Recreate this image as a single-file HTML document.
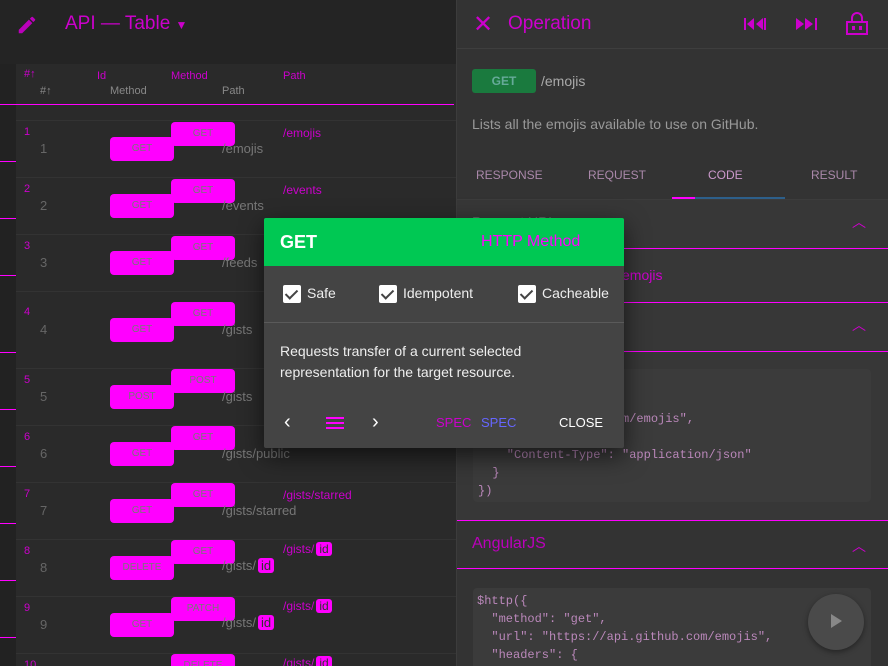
<!DOCTYPE html>
<html style="overflow:hidden;width:888px;height:666px"><head><meta charset="utf-8"><style>
*{box-sizing:border-box;margin:0;padding:0}
body{width:888px;height:666px;overflow:hidden;background:#222;font-family:"Liberation Sans",sans-serif;position:relative;color:#999}
.a{position:absolute}
.mg{background:#f0f}
.bd{position:absolute;width:64px;height:24px;border-radius:4px;background:#f0f;color:#777;font-size:10px;text-align:center;line-height:24px}
.num{position:absolute;left:40px;font-size:13px;color:#666}
.pth{position:absolute;left:222px;font-size:13px;color:#777}
.pm{position:absolute;left:283px;font-size:12px;color:#c0c}
.nm{position:absolute;left:24px;font-size:11px;color:#c0c}
.sep{position:absolute;left:16px;width:440px;height:1px;background:#333}
.ml{position:absolute;left:0;width:16px;height:1px;background:#f0f}
.id{display:inline-block;background:#f0f;color:#333;border-radius:3px;padding:0 3px;margin-left:2px}
.code{font-family:"Liberation Mono",monospace;font-size:12px;color:#b8b;white-space:pre;line-height:18px}
.cb{position:absolute;width:18px;height:18px;background:#fff;border-radius:2px}
.cb:after{content:"";position:absolute;left:5px;top:2px;width:5px;height:10px;border:solid #444;border-width:0 2px 2px 0;transform:rotate(45deg)}
</style></head><body>
<div class="a" style="left:0;top:0;width:456px;height:64px;background:#242424"></div>
<svg class="a" style="left:16px;top:14px" width="22" height="22" viewBox="0 0 24 24"><path d="M3 17.25V21h3.75L17.8 9.94l-3.75-3.75L3 17.25zM20.7 7.04a1 1 0 000-1.41l-2.34-2.34a1 1 0 00-1.41 0l-1.83 1.83 3.75 3.75 1.83-1.83z" fill="#b0b"/></svg>
<div class="a" style="left:65px;top:13px;font-size:19px;color:#c0c">API — Table <span style="font-size:12px">▼</span></div>
<div class="a" style="left:16px;top:64px;width:440px;height:602px;background:#2a2a2a"></div>
<div class="a" style="left:24px;top:68px;font-size:11px;color:#c0c">#↑</div>
<div class="a" style="left:97px;top:70px;font-size:11px;color:#c0c">Id</div>
<div class="a" style="left:171px;top:70px;font-size:11px;color:#c0c">Method</div>
<div class="a" style="left:283px;top:70px;font-size:11px;color:#c0c">Path</div>
<div class="a" style="left:40px;top:85px;font-size:11px;color:#888">#↑</div>
<div class="a" style="left:110px;top:85px;font-size:11px;color:#888">Method</div>
<div class="a" style="left:222px;top:85px;font-size:11px;color:#888">Path</div>
<div class="a mg" style="left:0;top:104px;width:454px;height:1px"></div>

<div class="sep" style="top:120px"></div><div class="sep" style="top:177px"></div><div class="sep" style="top:234px"></div><div class="sep" style="top:291px"></div><div class="sep" style="top:368px"></div><div class="sep" style="top:425px"></div><div class="sep" style="top:482px"></div><div class="sep" style="top:539px"></div><div class="sep" style="top:596px"></div><div class="sep" style="top:653px"></div>
<div class="ml" style="top:161px"></div><div class="ml" style="top:218px"></div><div class="ml" style="top:275px"></div><div class="ml" style="top:352px"></div><div class="ml" style="top:409px"></div><div class="ml" style="top:466px"></div><div class="ml" style="top:523px"></div><div class="ml" style="top:580px"></div><div class="ml" style="top:637px"></div>

<div class="nm" style="top:126px">1</div><div class="num" style="top:141px">1</div><div class="bd" style="left:171px;top:122px">GET</div><div class="bd" style="left:110px;top:137px">GET</div><div class="pm" style="top:126px">/emojis</div><div class="pth" style="top:141px">/emojis</div>
<div class="nm" style="top:183px">2</div><div class="num" style="top:198px">2</div><div class="bd" style="left:171px;top:179px">GET</div><div class="bd" style="left:110px;top:194px">GET</div><div class="pm" style="top:183px">/events</div><div class="pth" style="top:198px">/events</div>
<div class="nm" style="top:240px">3</div><div class="num" style="top:255px">3</div><div class="bd" style="left:171px;top:236px">GET</div><div class="bd" style="left:110px;top:251px">GET</div><div class="pth" style="top:255px">/feeds</div>
<div class="nm" style="top:306px">4</div><div class="num" style="top:322px">4</div><div class="bd" style="left:171px;top:302px">GET</div><div class="bd" style="left:110px;top:318px">GET</div><div class="pth" style="top:322px">/gists</div>
<div class="nm" style="top:374px">5</div><div class="num" style="top:389px">5</div><div class="bd" style="left:171px;top:369px">POST</div><div class="bd" style="left:110px;top:385px">POST</div><div class="pth" style="top:389px">/gists</div>
<div class="nm" style="top:431px">6</div><div class="num" style="top:446px">6</div><div class="bd" style="left:171px;top:426px">GET</div><div class="bd" style="left:110px;top:442px">GET</div><div class="pth" style="top:446px">/gists/public</div>
<div class="nm" style="top:488px">7</div><div class="num" style="top:503px">7</div><div class="bd" style="left:171px;top:483px">GET</div><div class="bd" style="left:110px;top:499px">GET</div><div class="pm" style="top:488px">/gists/starred</div><div class="pth" style="top:503px">/gists/starred</div>
<div class="nm" style="top:545px">8</div><div class="num" style="top:560px">8</div><div class="bd" style="left:171px;top:540px">GET</div><div class="bd" style="left:110px;top:556px">DELETE</div><div class="pm" style="top:542px">/gists/<span class="id">id</span></div><div class="pth" style="top:558px">/gists/<span class="id">id</span></div>
<div class="nm" style="top:602px">9</div><div class="num" style="top:617px">9</div><div class="bd" style="left:171px;top:597px">PATCH</div><div class="bd" style="left:110px;top:613px">GET</div><div class="pm" style="top:599px">/gists/<span class="id">id</span></div><div class="pth" style="top:615px">/gists/<span class="id">id</span></div>
<div class="nm" style="top:659px">10</div><div class="bd" style="left:171px;top:654px">DELETE</div><div class="pm" style="top:656px">/gists/<span class="id">id</span></div>

<div class="a" style="left:456px;top:0;width:432px;height:666px;background:#333;border-left:1px solid #3c3c3c"></div>
<div class="a" style="left:457px;top:48px;width:431px;height:1px;background:#3e3e3e"></div>
<div class="a" style="left:473px;top:10px;font-size:24px;color:#c0c">✕</div>
<div class="a" style="left:508px;top:13px;font-size:19px;color:#c0c">Operation</div>
<svg class="a" style="left:743px;top:16px" width="28" height="16" viewBox="0 0 28 16"><rect x="1" y="2" width="2" height="12" fill="#c0c"/><path d="M4 8l7-6v12zM13 8l7-6v12z" fill="#c0c"/><rect x="21" y="2" width="2" height="12" fill="#c0c"/></svg>
<svg class="a" style="left:794px;top:16px" width="28" height="16" viewBox="0 0 28 16"><path d="M2 2l8 6-8 6zM11 2l8 6-8 6z" fill="#c0c"/><rect x="21" y="2" width="2" height="12" fill="#c0c"/></svg>
<svg class="a" style="left:845px;top:12px" width="24" height="24" viewBox="0 0 24 24"><rect x="2" y="10" width="20" height="12" fill="none" stroke="#c0c" stroke-width="2"/><path d="M7 10V6a5 5 0 0110 0v4" fill="none" stroke="#c0c" stroke-width="2"/><rect x="7" y="14" width="3" height="4" fill="#c0c"/><rect x="14" y="14" width="3" height="4" fill="#c0c"/></svg>
<div class="a" style="left:472px;top:69px;width:64px;height:24px;background:#1a7a3e;border-radius:3px;color:#6a9;font-size:12px;text-align:center;line-height:24px;font-weight:bold">GET</div>
<div class="a" style="left:541px;top:73px;font-size:14px;color:#aaa">/emojis</div>
<div class="a" style="left:472px;top:116px;font-size:14px;color:#999">Lists all the emojis available to use on GitHub.</div>
<div class="a" style="left:476px;top:168px;font-size:12px;color:#a8a">RESPONSE</div>
<div class="a" style="left:588px;top:168px;font-size:12px;color:#a8a">REQUEST</div>
<div class="a" style="left:708px;top:168px;font-size:12px;color:#c9c">CODE</div>
<div class="a" style="left:811px;top:168px;font-size:12px;color:#a8a">RESULT</div>
<div class="a" style="left:672px;top:197px;width:113px;height:2px;background:#2d5f8a"></div>
<div class="a mg" style="left:672px;top:197px;width:23px;height:2px"></div>
<div class="a" style="left:457px;top:199px;width:431px;height:1px;background:#3c3c3c"></div>
<div class="a" style="left:457px;top:200px;width:431px;height:320px;background:#373737"></div>
<div class="a" style="left:472px;top:214px;font-size:14px;color:#888">Request URL</div>
<div class="a" style="left:852px;top:212px;font-size:14px;color:#c0c">︿</div>
<div class="a mg" style="left:620px;top:248px;width:268px;height:1px"></div>
<div class="a" style="left:622px;top:267px;font-size:14px;color:#c0c">emojis</div>
<div class="a mg" style="left:620px;top:302px;width:268px;height:1px"></div>
<div class="a" style="left:852px;top:315px;font-size:14px;color:#c0c">︿</div>
<div class="a mg" style="left:620px;top:351px;width:268px;height:1px"></div>
<div class="a" style="left:473px;top:369px;width:398px;height:133px;background:#3b3b3b;border-radius:4px"></div>
<div class="a code" style="left:478px;top:410px">         i.github.com/emojis",

    "Content-Type": "application/json"
  }
})</div>
<div class="a mg" style="left:457px;top:520px;width:431px;height:1px"></div>
<div class="a" style="left:472px;top:535px;font-size:16px;color:#b0b">AngularJS</div>
<div class="a" style="left:852px;top:536px;font-size:14px;color:#c0c">︿</div>
<div class="a mg" style="left:457px;top:568px;width:431px;height:1px"></div>
<div class="a" style="left:473px;top:588px;width:398px;height:78px;background:#3b3b3b;border-radius:4px 4px 0 0"></div>
<div class="a code" style="left:477px;top:592px">$http({
  "method": "get",
  "url": "https://api.github.com/emojis",
  "headers": {</div>
<div class="a" style="left:808px;top:594px;width:56px;height:56px;border-radius:50%;background:#4a4a4a;box-shadow:0 2px 6px rgba(0,0,0,.4)"></div>
<div class="a" style="left:831px;top:614px;width:0;height:0;border-left:11px solid #888;border-top:7px solid transparent;border-bottom:7px solid transparent"></div>

<div class="a" style="left:264px;top:218px;width:360px;height:230px;background:#444;border-radius:2px;box-shadow:0 8px 24px rgba(0,0,0,.6)"></div>
<div class="a" style="left:264px;top:218px;width:360px;height:48px;background:#00c853;border-radius:2px 2px 0 0"></div>
<div class="a" style="left:280px;top:232px;font-size:18px;color:#fff;font-weight:bold">GET</div>
<div class="a" style="left:481px;top:233px;font-size:16px;color:#f0f">HTTP Method</div>
<div class="cb" style="left:283px;top:285px"></div><div class="a" style="left:307px;top:285px;font-size:14px;color:#eee">Safe</div>
<div class="cb" style="left:379px;top:285px"></div><div class="a" style="left:403px;top:285px;font-size:14px;color:#eee">Idempotent</div>
<div class="cb" style="left:518px;top:285px"></div><div class="a" style="left:542px;top:285px;font-size:14px;color:#eee">Cacheable</div>
<div class="a" style="left:264px;top:322px;width:360px;height:1px;background:#5a5a5a"></div>
<div class="a" style="left:280px;top:341px;font-size:14px;color:#eee;line-height:21px">Requests transfer of a current selected<br>representation for the target resource.</div>
<div class="a" style="left:284px;top:411px;font-size:20px;color:#fff">‹</div>
<div class="a" style="left:326px;top:417px;width:18px;height:12px;border-top:2px solid #f0f;border-bottom:2px solid #f0f"></div><div class="a mg" style="left:326px;top:422px;width:18px;height:2px"></div>
<div class="a" style="left:372px;top:411px;font-size:20px;color:#fff">›</div>
<div class="a" style="left:436px;top:415px;font-size:13px;color:#c0c">SPEC</div>
<div class="a" style="left:481px;top:415px;font-size:13px;color:#66f">SPEC</div>
<div class="a" style="left:559px;top:415px;font-size:13px;color:#fff">CLOSE</div>
</body></html>
